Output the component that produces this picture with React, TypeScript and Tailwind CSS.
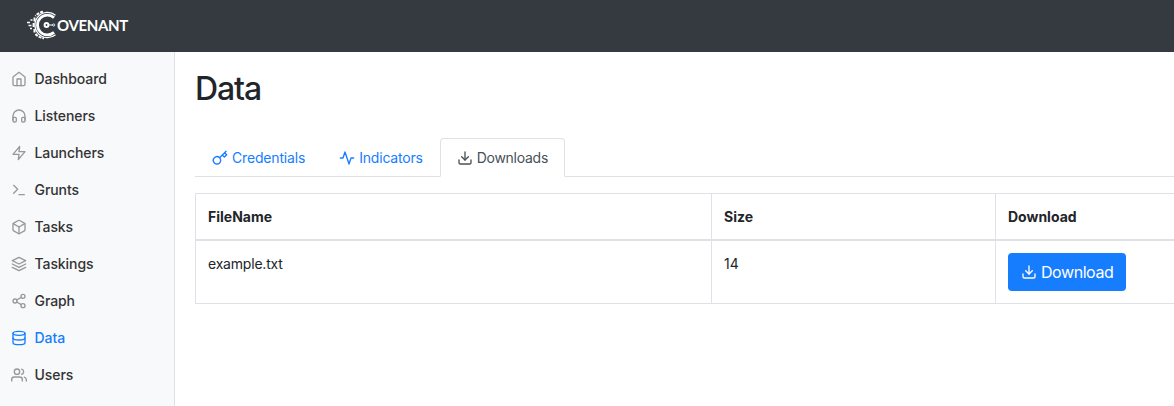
import type { IconType } from "react-icons";
import {
  FiActivity,
  FiBox,
  FiDatabase,
  FiDownload,
  FiHeadphones,
  FiHome,
  FiKey,
  FiLayers,
  FiShare2,
  FiTerminal,
  FiUsers,
  FiZap,
} from "react-icons/fi";

const links: { label: string; icon: IconType; active?: boolean }[] = [
  { label: "Dashboard", icon: FiHome },
  { label: "Listeners", icon: FiHeadphones },
  { label: "Launchers", icon: FiZap },
  { label: "Grunts", icon: FiTerminal },
  { label: "Tasks", icon: FiBox },
  { label: "Taskings", icon: FiLayers },
  { label: "Graph", icon: FiShare2 },
  { label: "Data", icon: FiDatabase, active: true },
  { label: "Users", icon: FiUsers },
];

function Logo() {
  return (
    <a href="#" className="flex h-[30px] items-center text-white">
      <svg width="31" height="30" viewBox="0 0 31 30" fill="none" stroke="currentColor">
        <path d="M29.5 5.2A12.6 12.6 0 1 0 29.5 24.8" strokeWidth="1.3" />
        <path d="M28 7.6A9.9 9.9 0 1 0 28 22.4" strokeWidth="2.8" />
        <path d="M17 1.8A13 13 0 0 0 9.5 6M9.5 24A13 13 0 0 0 18 28.2" strokeWidth="2" strokeDasharray="3 1" />
        <path d="M8.5 7.5v4M7.6 13v4M8.5 19v3.5" strokeWidth="2" />
        <path d="M1 12.5h3M2.5 15.5h3M4 18.5h2M4.5 10h2" strokeWidth="1.5" />
        <circle cx="20.5" cy="15" r="2.9" fill="currentColor" stroke="none" />
        <circle cx="20.5" cy="15" r="0.9" fill="#343a40" stroke="none" />
        <path d="M23 15h4" strokeWidth="1" />
        <circle cx="27.7" cy="15" r="1.1" strokeWidth="0.8" />
      </svg>
      <span className="font-[Lato,sans-serif] text-[15px] leading-[30px] font-bold tracking-[-0.35px]">
        OVENANT
      </span>
    </a>
  );
}

export default function App() {
  return (
    <div className="flex h-[406px] w-full flex-col overflow-hidden bg-white font-[Inter,sans-serif] text-sm text-[#212529]">
      <header className="flex h-[52px] shrink-0 items-center bg-[#343a40] pb-[2px] pl-[26px]">
        <Logo />
      </header>
      <div className="flex min-h-0 flex-1">
        <nav className="w-[175px] shrink-0 border-r border-[#dee2e6] bg-[#f8f9fa] pt-2">
          {links.map(({ label, icon: Icon, active }) => (
            <a
              key={label}
              href="#"
              className={
                active
                  ? "flex h-[37px] items-center gap-[7.5px] pl-[11px] font-medium tracking-[-0.08px] text-[#177dff]"
                  : "flex h-[37px] items-center gap-[7.5px] pl-[11px] font-medium tracking-[-0.08px] text-[#333]"
              }
            >
              <Icon size={16} className={active ? "text-[#177dff]" : "text-[#999]"} />
              <span>{label}</span>
            </a>
          ))}
        </nav>
        <main className="min-w-0 flex-1 overflow-hidden pl-5">
          <h1 className="pt-[18px] text-[32px] leading-[38px] font-medium tracking-[-1.1px]">Data</h1>
          <div className="mt-[30px] flex h-[39px] border-b border-[#dee2e6]">
            <a href="#" className="flex h-[39px] items-center gap-1 px-[17px] tracking-[-0.17px] text-[#177dff]">
              <FiKey size={16} />
              <span>Credentials</span>
            </a>
            <a href="#" className="flex h-[39px] items-center gap-1 px-[17px] tracking-[-0.2px] text-[#177dff]">
              <FiActivity size={16} />
              <span>Indicators</span>
            </a>
            <a
              href="#"
              className="flex h-[39px] items-center gap-1 rounded-t border border-[#dee2e6] border-b-white bg-white px-4 tracking-[-0.26px] text-[#495057]"
            >
              <FiDownload size={16} />
              <span>Downloads</span>
            </a>
          </div>
          <table className="mt-4 w-[1100px] table-fixed border-collapse border border-[#dee2e6] text-left">
            <colgroup>
              <col className="w-[516px]" />
              <col className="w-[284px]" />
              <col />
            </colgroup>
            <thead>
              <tr className="h-[46px] border-b-2 border-[#dee2e6]">
                <th className="border-r border-[#dee2e6] px-3 pt-[2px] font-bold">FileName</th>
                <th className="border-r border-[#dee2e6] px-3 pt-[2px] font-bold">Size</th>
                <th className="px-3 pt-[2px] font-bold">Download</th>
              </tr>
            </thead>
            <tbody>
              <tr className="h-[64px] align-top">
                <td className="border-r border-[#dee2e6] px-3 pt-[13px] tracking-[-0.2px]">example.txt</td>
                <td className="border-r border-[#dee2e6] px-3 pt-[13px]">14</td>
                <td className="px-3 pt-3">
                  <button className="flex h-[38px] w-[118px] items-center gap-1 rounded bg-[#177dff] pl-[13px] text-base tracking-[-0.43px] text-white">
                    <FiDownload size={16} />
                    <span>Download</span>
                  </button>
                </td>
              </tr>
            </tbody>
          </table>
        </main>
      </div>
    </div>
  );
}
